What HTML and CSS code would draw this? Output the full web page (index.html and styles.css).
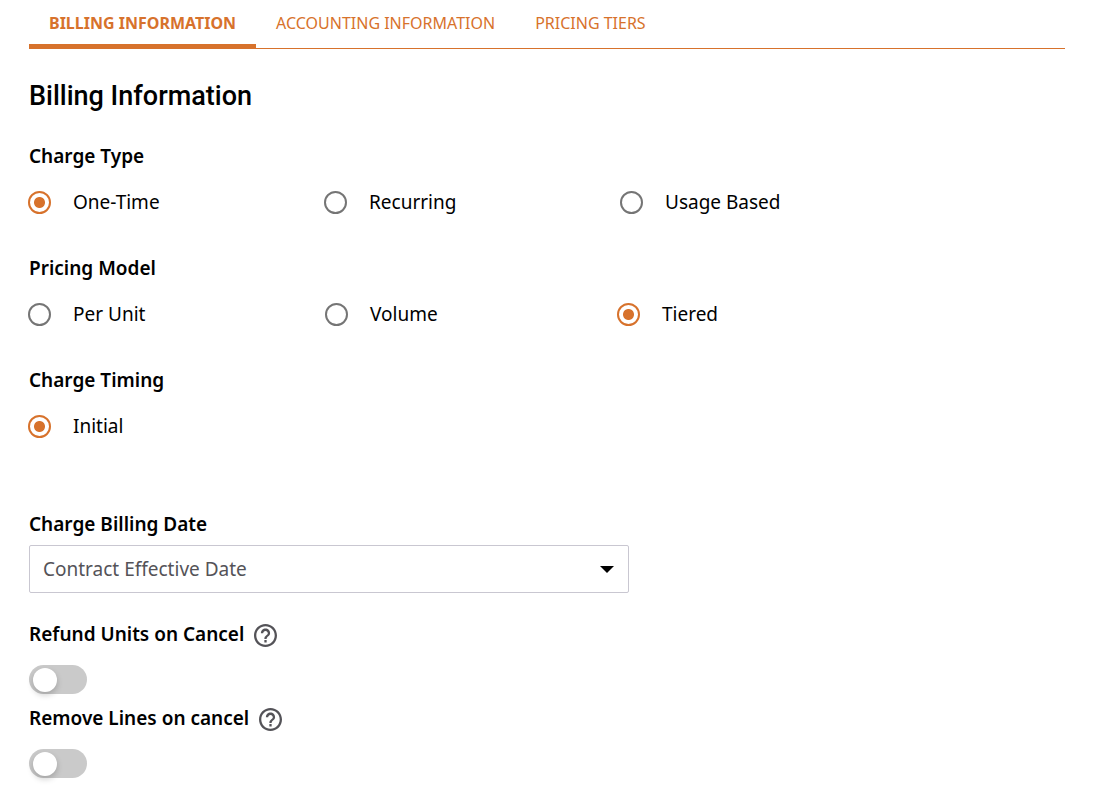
FILE: index.html
```html
<!DOCTYPE html>
<html lang="en">
<head>
<meta charset="utf-8">
<meta name="viewport" content="width=device-width, initial-scale=1">
<title>Billing Information</title>
<link rel="stylesheet" href="styles.css">
</head>
<body>
<main class="page">
  <nav class="tabs" aria-label="Sections">
    <button class="tab tab-active" type="button" aria-current="page">BILLING INFORMATION</button>
    <button class="tab" type="button">ACCOUNTING INFORMATION</button>
    <button class="tab" type="button">PRICING TIERS</button>
  </nav>
  <h1 class="title">Billing Information</h1>
  <form class="form">
    <fieldset class="group">
      <legend class="label">Charge Type</legend>
      <div class="options">
        <label class="option"><input class="radio" type="radio" name="type" checked>One-Time</label>
        <label class="option"><input class="radio" type="radio" name="type">Recurring</label>
        <label class="option"><input class="radio" type="radio" name="type">Usage Based</label>
      </div>
    </fieldset>
    <fieldset class="group">
      <legend class="label">Pricing Model</legend>
      <div class="options options-model">
        <label class="option"><input class="radio" type="radio" name="model">Per Unit</label>
        <label class="option"><input class="radio" type="radio" name="model">Volume</label>
        <label class="option"><input class="radio" type="radio" name="model" checked>Tiered</label>
      </div>
    </fieldset>
    <fieldset class="group group-last">
      <legend class="label">Charge Timing</legend>
      <div class="options">
        <label class="option"><input class="radio" type="radio" name="timing" checked>Initial</label>
      </div>
    </fieldset>
    <div class="field">
      <label class="label" for="billing-date">Charge Billing Date</label>
      <div class="select-wrap">
        <select class="select" id="billing-date"><option>Contract Effective Date</option></select>
        <svg class="caret" viewBox="0 0 14 7" aria-hidden="true"><path d="M0 0h14L7 7z"/></svg>
      </div>
    </div>
    <div class="switch-field">
      <div class="switch-head">
        <label class="label" for="refund">Refund Units on Cancel</label>
        <button class="help" type="button" aria-label="Help"><svg class="help-icon" viewBox="2 2 20 20" aria-hidden="true"><path d="M11 18h2v-2h-2v2zm1-16C6.480 2 2 6.480 2 12s4.480 10 10 10 10-4.480 10-10S17.520 2 12 2zm0 18c-4.410 0-8-3.590-8-8s3.590-8 8-8 8 3.590 8 8-3.590 8-8 8zm0-14c-2.210 0-4 1.790-4 4h2c0-1.100.9-2 2-2s2 .9 2 2c0 2-3 1.750-3 5h2c0-2.250 3-2.500 3-5 0-2.210-1.790-4-4-4z"/></svg></button>
      </div>
      <input class="switch" id="refund" type="checkbox" role="switch">
    </div>
    <div class="switch-field">
      <div class="switch-head">
        <label class="label" for="remove">Remove Lines on cancel</label>
        <button class="help" type="button" aria-label="Help"><svg class="help-icon" viewBox="2 2 20 20" aria-hidden="true"><path d="M11 18h2v-2h-2v2zm1-16C6.480 2 2 6.480 2 12s4.480 10 10 10 10-4.480 10-10S17.520 2 12 2zm0 18c-4.410 0-8-3.590-8-8s3.590-8 8-8 8 3.590 8 8-3.590 8-8 8zm0-14c-2.210 0-4 1.790-4 4h2c0-1.100.9-2 2-2s2 .9 2 2c0 2-3 1.750-3 5h2c0-2.250 3-2.500 3-5 0-2.210-1.790-4-4-4z"/></svg></button>
      </div>
      <input class="switch" id="remove" type="checkbox" role="switch">
    </div>
  </form>
</main>
</body>
</html>
```
FILE: styles.css
```css
:root {
  --accent: #d7722c;
}

* {
  box-sizing: border-box;
}

body {
  margin: 0;
  background: #fff;
  color: #000;
  font-family: "Noto Sans", sans-serif;
  font-size: 19px;
  line-height: 28px;
}

.page {
  padding: 0 31px 16px 29px;
}

.tabs {
  display: flex;
  border-bottom: 1px solid var(--accent);
}

.tab {
  margin: 0 0 -1px;
  padding: 11px 20px 9px;
  border: 0;
  border-bottom: 5px solid transparent;
  background: none;
  color: var(--accent);
  font: 400 16px/24px "Noto Sans", sans-serif;
  cursor: pointer;
}

.tab-active {
  border-bottom-color: var(--accent);
  font-weight: 700;
}

.title {
  margin: 31px 0 30px;
  font: 500 27px/32px Roboto, sans-serif;
}

.group {
  min-width: 0;
  margin: 0 0 38px;
  padding: 0;
  border: 0;
}

.group-last {
  margin-bottom: 70px;
}

.label {
  display: block;
  padding: 0;
  font-weight: 600;
}

.options {
  display: grid;
  grid-template-columns: 296px 296px 1fr;
  padding-top: 18px;
}

.options-model {
  grid-template-columns: 297px 292px 1fr;
}

.option {
  display: flex;
  align-items: center;
  gap: 22px;
  margin-left: -1px;
}

.radio {
  appearance: none;
  flex: none;
  width: 23px;
  height: 23px;
  margin: 0;
  border: 2px solid #757575;
  border-radius: 50%;
}

.radio:checked {
  border-color: var(--accent);
  background: radial-gradient(circle, var(--accent) 5px, transparent 6px);
}

.field {
  max-width: 600px;
  margin-bottom: 27px;
}

.select-wrap {
  display: grid;
  align-items: center;
  margin-top: 7px;
}

.select {
  grid-area: 1 / 1;
  appearance: none;
  width: 100%;
  height: 48px;
  padding: 0 40px 0 13px;
  border: 1px solid #c9c7d1;
  border-radius: 2px;
  background: #fff;
  color: #545358;
  font: 400 19px/28px "Noto Sans", sans-serif;
}

.caret {
  grid-area: 1 / 1;
  justify-self: end;
  width: 14px;
  height: 7px;
  margin-right: 15px;
  pointer-events: none;
}

.switch-field {
  margin-bottom: 10px;
}

.switch-head {
  display: flex;
  align-items: center;
  gap: 10px;
  margin-bottom: 17px;
}

.help {
  display: flex;
  padding: 2px 0 0;
  border: 0;
  background: none;
}

.help-icon {
  width: 23px;
  height: 23px;
  fill: #545358;
}

.switch {
  appearance: none;
  display: flex;
  align-items: center;
  width: 58px;
  height: 29px;
  margin: 0;
  padding: 0 4px;
  border-radius: 15px;
  background: #cacaca;
}

.switch::before {
  content: "";
  width: 24px;
  height: 24px;
  border-radius: 50%;
  background: #fff;
  box-shadow: 0 3px 6px rgba(0, 0, 0, 0.2);
}

.switch:checked {
  justify-content: flex-end;
  background: var(--accent);
}
```
